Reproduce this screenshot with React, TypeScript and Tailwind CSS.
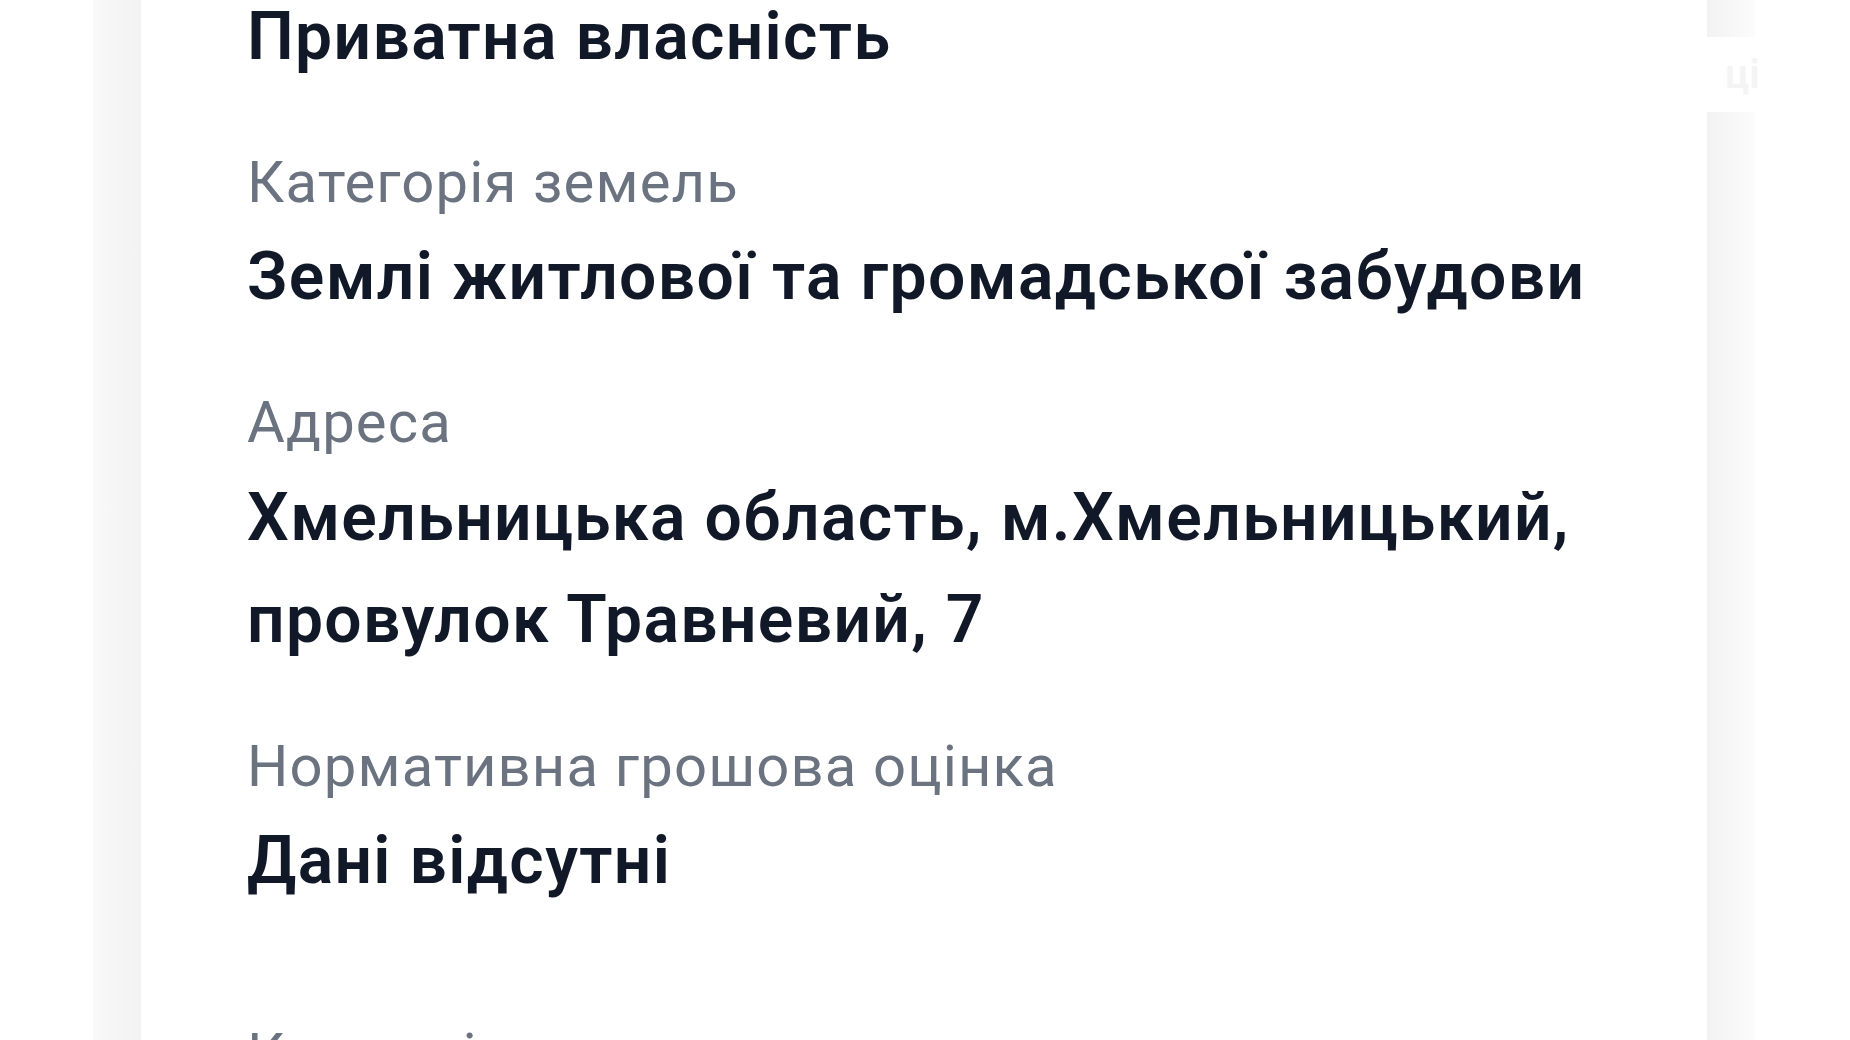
const FIELDS = [
  { label: "Категорія земель", lines: ["Землі житлової та громадської забудови"] },
  { label: "Адреса", lines: ["Хмельницька область, м.Хмельницький,", "провулок Травневий, 7"] },
  { label: "Нормативна грошова оцінка", lines: ["Дані відсутні"] },
];

function Field({ label, lines }: { label: string; lines: string[] }) {
  const multi = lines.length > 1;
  return (
    <div className="mt-[50px]">
      <p className="whitespace-nowrap text-[58px] leading-[90px] tracking-[1.15px] text-[#6b7280]">{label}</p>
      {lines.map((line) => (
        <p
          key={line}
          className={`whitespace-nowrap text-[66px] font-semibold tracking-[1.35px] text-[#111827] ${
            multi ? "leading-[102px]" : "leading-[100px]"
          }`}
        >
          {line}
        </p>
      ))}
    </div>
  );
}

export default function App() {
  return (
    <div
      className="relative flex h-[1040px] w-full overflow-hidden bg-white"
      style={{ fontFamily: "Roboto, 'Noto Sans', sans-serif" }}
    >
      <div className="w-[93px] shrink-0 bg-white" />
      <div className="w-[48px] shrink-0 bg-gradient-to-r from-[#f9f9f9] to-[#f2f2f3]" />

      {/* card */}
      <div className="w-[1566px] shrink-0 bg-white pl-[106px] pr-[40px]">
        <div className="-mt-[13px]">
          <p className="whitespace-nowrap text-[66px] leading-[100px] font-semibold tracking-[1.35px] text-[#111827]">
            Приватна власність
          </p>
          {FIELDS.map((f) => (
            <Field key={f.label} label={f.label} lines={f.lines} />
          ))}
          <p className="mt-[98px] whitespace-nowrap text-[58px] leading-[90px] tracking-[1.15px] text-[#6b7280]">
            Карта ділянки
          </p>
        </div>
      </div>

      <div className="w-[48px] shrink-0 bg-gradient-to-r from-[#f2f2f3] to-[#fcfcfc]" />
      <div className="flex-1 bg-white" />

      {/* faded floating badge on the right edge */}
      <div className="absolute left-[1707px] top-[37px] flex h-[75px] w-[143px] items-center bg-white pl-[18px]">
        <span className="text-[40px] font-semibold text-[#f4f4f4]">ці</span>
      </div>
    </div>
  );
}
